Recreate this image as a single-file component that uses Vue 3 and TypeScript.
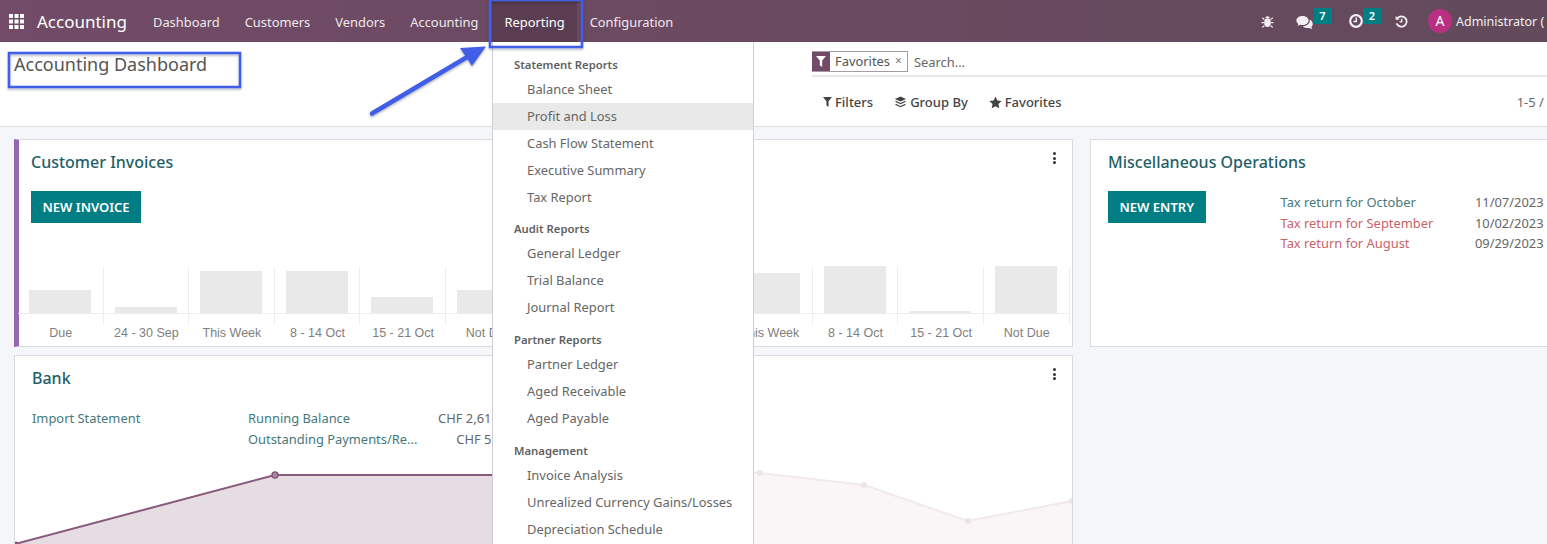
<script setup lang="ts">
type Bar = { label: string; top: number }
type MenuGroup = { title: string; items: string[] }

const navItems = ['Dashboard', 'Customers', 'Vendors', 'Accounting', 'Reporting', 'Configuration']

// top = how far the bar rises above the baseline
const invoiceBars: Bar[] = [
  { label: 'Due', top: 23 },
  { label: '24 - 30 Sep', top: 6 },
  { label: 'This Week', top: 42 },
  { label: '8 - 14 Oct', top: 42 },
  { label: '15 - 21 Oct', top: 16 },
  { label: 'Not Due', top: 23 },
]
// first two columns sit behind the open menu
const billBars: Bar[] = [
  { label: '', top: 30 },
  { label: '', top: 20 },
  { label: 'This Week', top: 40 },
  { label: '8 - 14 Oct', top: 47 },
  { label: '15 - 21 Oct', top: 2 },
  { label: 'Not Due', top: 47 },
]

const taxReturns = [
  { name: 'Tax return for October', date: '11/07/2023', late: false },
  { name: 'Tax return for September', date: '10/02/2023', late: true },
  { name: 'Tax return for August', date: '09/29/2023', late: true },
]

const menuGroups: MenuGroup[] = [
  {
    title: 'Statement Reports',
    items: ['Balance Sheet', 'Profit and Loss', 'Cash Flow Statement', 'Executive Summary', 'Tax Report'],
  },
  { title: 'Audit Reports', items: ['General Ledger', 'Trial Balance', 'Journal Report'] },
  { title: 'Partner Reports', items: ['Partner Ledger', 'Aged Receivable', 'Aged Payable'] },
  {
    title: 'Management',
    items: ['Invoice Analysis', 'Unrealized Currency Gains/Losses', 'Depreciation Schedule'],
  },
]
</script>

<template>
  <div class="screen">
    <header class="navbar">
      <svg class="apps" width="15" height="15" viewBox="0 0 15 15" fill="#fff">
        <rect x="0" y="0" width="4" height="4" /><rect x="5.5" y="0" width="4" height="4" /><rect x="11" y="0" width="4" height="4" />
        <rect x="0" y="5.5" width="4" height="4" /><rect x="5.5" y="5.5" width="4" height="4" /><rect x="11" y="5.5" width="4" height="4" />
        <rect x="0" y="11" width="4" height="4" /><rect x="5.5" y="11" width="4" height="4" /><rect x="11" y="11" width="4" height="4" />
      </svg>
      <span class="brand">Accounting</span>
      <nav class="nav">
        <a v-for="item in navItems" :key="item" class="nav__item" :class="{ 'nav__item--open': item === 'Reporting' }">{{ item }}</a>
      </nav>
      <div class="systray">
        <svg class="tray-bug" width="13" height="13" viewBox="0 0 14 14" fill="#f3eef2">
          <ellipse cx="7" cy="8.3" rx="3.6" ry="4.7" />
          <path d="M4.3 3.2a2.8 2.4 0 0 1 5.4 0z" />
          <path d="M3.6 5 1.4 3M3.3 8.3H.6M3.6 11.4 1.4 13.4M10.4 5l2.2-2M10.7 8.3h2.7M10.4 11.4l2.2 2" stroke="#f3eef2" stroke-width="1.3" fill="none" />
        </svg>
        <span class="tray-item tray-item--chat">
          <svg width="18" height="15" viewBox="0 0 18 15">
            <path d="M6.5 1C3 1 .4 3 .4 5.5c0 1.4.8 2.6 2 3.4L1.5 11l2.8-1.2c.7.2 1.4.3 2.2.3 3.4 0 6.1-2 6.1-4.6S9.900 1 6.500 1z" fill="#f3eef2" />
            <path d="M13.700 4.500c.1.3.1.7.1 1 0 3.200-3.100 5.600-7 5.800 1 1.100 2.800 1.800 4.700 1.800.6 0 1.200-.1 1.800-.2l3 1.300-1-2.300c1-.8 1.500-1.800 1.500-2.900 0-1.900-1.200-3.500-3.100-4.500z" fill="#f3eef2" />
          </svg>
          <span class="badge">7</span>
        </span>
        <span class="tray-item tray-item--clock">
          <svg width="14" height="14" viewBox="0 0 14 14" fill="none" stroke="#f3eef2">
            <circle cx="7" cy="7" r="5.800" stroke-width="2.200" />
            <path d="M7.300 3.600v3.900H4.400" stroke-width="1.500" />
          </svg>
          <span class="badge">2</span>
        </span>
        <svg class="tray-history" width="13" height="13" viewBox="0 0 14 14" fill="none" stroke="#f3eef2">
          <path d="M2.600 3.400A5.600 5.600 0 1 1 1.700 9" stroke-width="1.900" />
          <path d="M.7 1v4.200h4.200z" fill="#f3eef2" stroke="none" />
          <path d="M7.200 4v3.400H5" stroke-width="1.500" />
        </svg>
        <span class="avatar">A</span>
        <span class="user">Administrator (</span>
      </div>
    </header>

    <section class="panel">
      <h1 class="panel__title">Accounting Dashboard</h1>
      <div class="panel__tools">
        <div class="search">
          <span class="facet">
            <span class="facet__icon">
              <svg width="10" height="11" viewBox="0 0 10 11" fill="#fff"><path d="M0 0h10L6.200 4.600V11L3.800 9.200V4.600z" /></svg>
            </span>
            <span class="facet__label">Favorites</span>
            <span class="facet__close">×</span>
          </span>
          <span class="search__hint">Search...</span>
        </div>
        <div class="filters">
          <span class="filter filter--filters">
            <svg width="9" height="10" viewBox="0 0 10 11" fill="#444"><path d="M0 0h10L6.200 4.600V11L3.800 9.200V4.600z" /></svg>
            Filters
          </span>
          <span class="filter filter--group">
            <svg width="13" height="13" viewBox="0 0 14 14" fill="#444">
              <path d="M7 .5 13 3.200 7 6 1 3.200z" />
              <path d="M2.500 5.500 1 6.300 7 9l6-2.700-1.500-.8L7 7.500z" />
              <path d="M2.500 8.600 1 9.400l6 2.800 6-2.800-1.500-.8L7 10.700z" />
            </svg>
            Group By
          </span>
          <span class="filter">
            <svg width="13" height="13" viewBox="0 0 14 14" fill="#444"><path d="m7 .6 2 4.200 4.600.6-3.400 3.200.9 4.600L7 11l-4.100 2.200.9-4.600L.4 5.400 5 4.800z" /></svg>
            Favorites
          </span>
          <span class="pager">1-5 /</span>
        </div>
      </div>
    </section>

    <main class="kanban">
      <article class="card card--accent">
        <h2 class="card__title">Customer Invoices</h2>
        <button class="action">New Invoice</button>
        <div class="bars">
          <div v-for="bar in invoiceBars" :key="bar.label" class="bars__col">
            <div class="bars__plot"><span class="bars__bar" :style="{ height: bar.top + 'px' }"></span></div>
            <span class="bars__label">{{ bar.label }}</span>
          </div>
        </div>
      </article>

      <article class="card">
        <span class="kebab"><i></i><i></i><i></i></span>
        <div class="bars">
          <div v-for="(bar, i) in billBars" :key="i" class="bars__col">
            <div class="bars__plot"><span class="bars__bar" :style="{ height: bar.top + 'px' }"></span></div>
            <span class="bars__label">{{ bar.label }}</span>
          </div>
        </div>
      </article>

      <article class="card">
        <h2 class="card__title">Miscellaneous Operations</h2>
        <div class="misc">
          <button class="action action--flush">New Entry</button>
          <ul class="returns">
            <li v-for="item in taxReturns" :key="item.name" class="returns__row">
              <span :class="item.late ? 'returns__late' : 'returns__name'">{{ item.name }}</span>
              <span class="returns__date">{{ item.date }}</span>
            </li>
          </ul>
        </div>
      </article>

      <article class="card card--bank">
        <h2 class="card__title">Bank</h2>
        <div class="bank">
          <a class="bank__link">Import Statement</a>
          <div class="bank__stats">
            <div class="bank__row"><span>Running Balance</span><span class="bank__amount">CHF 2,610.00</span></div>
            <div class="bank__row"><span>Outstanding Payments/Re...</span><span class="bank__amount">CHF 51.00</span></div>
          </div>
        </div>
        <svg class="graph" width="521" height="100" viewBox="0 0 521 100">
          <path d="M0 84 260 15H520V100H0z" fill="#e6dde3" />
          <path d="M0 84 260 15H520" fill="none" stroke="#875a7b" stroke-width="2" />
          <circle cx="1" cy="84" r="2.500" fill="#875a7b" />
          <circle cx="260" cy="15" r="3" fill="#a98ba0" stroke="#875a7b" stroke-width="1.500" />
        </svg>
      </article>

      <article class="card card--bank">
        <span class="kebab"><i></i><i></i><i></i></span>
        <svg class="graph graph--faint" width="521" height="100" viewBox="0 0 521 100">
          <path d="M0 0 207 13 311 25 415 61 519 41V100H0z" fill="#faf6f8" />
          <path d="M0 0 207 13 311 25 415 61 519 41" fill="none" stroke="#f0e9ed" stroke-width="2" />
          <circle cx="207" cy="13" r="3" fill="#ece4e9" />
          <circle cx="311" cy="25" r="3" fill="#ece4e9" />
          <circle cx="415" cy="61" r="3" fill="#ece4e9" />
          <circle cx="519" cy="41" r="3" fill="#ece4e9" />
        </svg>
      </article>
    </main>

    <div class="menu">
      <div v-for="group in menuGroups" :key="group.title" class="menu__group">
        <div class="menu__header">{{ group.title }}</div>
        <a v-for="item in group.items" :key="item" class="menu__item" :class="{ 'menu__item--hover': item === 'Profit and Loss' }">{{ item }}</a>
      </div>
    </div>

    <svg class="notes" width="1547" height="544" viewBox="0 0 1547 544">
      <defs>
        <filter id="soft" x="-10%" y="-10%" width="120%" height="130%">
          <feDropShadow dx="0" dy="1.500" stdDeviation="1.200" flood-color="#000" flood-opacity="0.3" />
        </filter>
      </defs>
      <g filter="url(#soft)" fill="none" stroke="#3f5fe6" stroke-width="2.500">
        <rect x="490" y="0" width="92" height="47" />
        <rect x="9" y="53" width="231" height="34" />
      </g>
      <g filter="url(#soft)">
        <path d="M372 113.500 468 56.500" stroke="#3f5fe6" stroke-width="4.500" stroke-linecap="round" />
        <path d="M486 46.500 472 66 460 48z" fill="#3f5fe6" />
      </g>
    </svg>
  </div>
</template>

<style>
html,
body {
  margin: 0;
  background: #fff;
}
</style>

<style scoped>
.screen {
  position: relative;
  width: 1547px;
  height: 544px;
  overflow: hidden;
  font-family: 'Noto Sans', 'Open Sans', sans-serif;
  font-size: 12.900px;
  color: #4c4c4c;
  background: #f5f6f9;
}

.navbar {
  display: flex;
  align-items: center;
  height: 42px;
  padding-left: 9px;
  background: linear-gradient(90deg, #714b67 0%, #6c4a62 40%, #624a5b 100%);
  color: #f3eef2;
  white-space: nowrap;
}
.apps {
  flex: none;
}
.brand {
  margin-left: 13px;
  font-size: 17px;
  color: #fff;
}
.nav {
  display: flex;
  margin-left: 13.500px;
  height: 100%;
}
.nav__item {
  display: flex;
  align-items: center;
  padding: 1px 12.500px 0;
  color: #efe8ed;
}
.nav__item--open {
  margin-left: 1px;
  background: #5b3d52;
  color: #fff;
}
.systray {
  display: flex;
  align-items: center;
  margin-left: auto;
  flex: none;
  width: 287px;
  height: 100%;
  padding-left: 1px;
  box-sizing: border-box;
}
.tray-bug {
  flex: none;
}
.tray-item {
  display: flex;
  align-items: flex-start;
  height: 18px;
}
.tray-item--chat svg {
  margin-top: 3px;
}
.tray-item--clock svg {
  margin-top: 2px;
}
.tray-item--chat {
  margin-left: 22px;
}
.tray-item--clock {
  margin-left: 17px;
}
.badge {
  margin-top: -4px;
  width: 18px;
  height: 16px;
  background: #017e84;
  color: #fff;
  font-size: 11px;
  font-weight: 600;
  line-height: 15px;
  text-align: center;
}
.tray-item--chat .badge {
  margin-left: -1px;
  width: 19px;
}
.tray-history {
  flex: none;
  margin-left: 14px;
}
.avatar {
  flex: none;
  width: 24px;
  height: 24px;
  margin-left: 20px;
  border-radius: 50%;
  background: #b92f82;
  color: #fff;
  text-align: center;
  line-height: 24px;
  font-size: 14px;
}
.user {
  margin-left: 4px;
  padding-top: 1px;
  font-size: 12.500px;
}

.panel {
  display: flex;
  height: 84px;
  border-bottom: 1px solid #dcdee1;
  background: #fff;
  box-sizing: content-box;
}
.panel__title {
  width: 812px;
  flex: none;
  margin: 0;
  padding: 9px 0 0 14px;
  box-sizing: border-box;
  font-size: 18px;
  font-weight: 400;
  line-height: 26px;
  color: #555;
}
.panel__tools {
  flex: 1;
}
.search {
  display: flex;
  align-items: center;
  height: 27px;
  padding-top: 6px;
  border-bottom: 2px solid #e9e9ea;
}
.facet {
  display: flex;
  align-items: stretch;
  height: 21px;
  border: 1px solid #a69aa3;
  border-left: 0;
  box-sizing: border-box;
}
.facet__icon {
  display: flex;
  align-items: center;
  justify-content: center;
  width: 18px;
  background: #714b67;
}
.facet__label {
  margin-left: 5px;
  line-height: 19px;
  color: #555;
}
.facet__close {
  margin: 0 5px 0 5px;
  line-height: 18px;
  font-size: 12px;
  color: #777;
}
.search__hint {
  margin-left: 6px;
  color: #666;
}
.filters {
  display: flex;
  align-items: center;
  gap: 21px;
  height: 50px;
  padding-left: 11px;
  font-size: 13px;
  font-weight: 500;
  color: #444;
}
.filter {
  display: flex;
  align-items: center;
  gap: 3px;
  white-space: nowrap;
}
.pager {
  margin-left: 434px;
  font-weight: 400;
  color: #666;
  white-space: nowrap;
}

.kanban {
  display: grid;
  grid-template-columns: repeat(3, 521px);
  grid-template-rows: 208px 208px;
  column-gap: 17px;
  row-gap: 8px;
  padding: 12px 0 0 14px;
  width: 1700px;
}
.card {
  position: relative;
  box-sizing: border-box;
  padding: 11px 16px 0 17px;
  background: #fff;
  border: 1px solid #d9dbe0;
}
.card--accent {
  border-left: 5px solid #9467b5;
  padding-left: 12px;
}
.card--bank {
  overflow: hidden;
}
.card__title {
  margin: 0;
  font-size: 16px;
  font-weight: 500;
  line-height: 22px;
  color: #1f6068;
  white-space: nowrap;
}
.kebab {
  position: absolute;
  top: 12px;
  right: 16px;
  display: flex;
  flex-direction: column;
  gap: 1.500px;
}
.kebab i {
  display: block;
  width: 3px;
  height: 3px;
  border-radius: 50%;
  background: #333;
}
.action {
  display: block;
  margin-top: 18px;
  height: 32px;
  padding: 0 11.500px;
  border: 0;
  background: #017e84;
  color: #fff;
  font-family: inherit;
  font-size: 13px;
  font-weight: 600;
  text-transform: uppercase;
  white-space: nowrap;
}
.action--flush {
  margin-top: 0;
  flex: none;
}
.bars {
  position: absolute;
  left: 0;
  right: 2.500px;
  bottom: 0;
  display: flex;
  justify-content: flex-end;
}
.bars__col {
  position: relative;
  width: 85.600px;
  flex: none;
  height: 80px;
}
.bars__col::after {
  content: '';
  position: absolute;
  right: 0;
  top: 1px;
  height: 57px;
  width: 1px;
  background: #eeeeee;
}
.bars__plot {
  display: flex;
  align-items: flex-end;
  justify-content: center;
  height: 47px;
  padding-right: 1.500px;
  border-bottom: 1px solid #ededed;
}
.bars__bar {
  display: block;
  width: 62px;
  background: #e9e9e9;
}
.bars__label {
  display: block;
  margin-top: 11px;
  text-align: center;
  font-family: 'Liberation Sans', Arial, sans-serif;
  font-size: 12.500px;
  line-height: 16px;
  color: #808080;
  white-space: nowrap;
}

.misc {
  display: flex;
  margin-top: 18px;
}
.returns {
  flex: 1;
  margin: 1px 0 0 75px;
  padding: 0;
  list-style: none;
}
.returns__row {
  display: flex;
  justify-content: space-between;
  width: 263px;
  line-height: 20.500px;
}
.returns__name {
  color: #45797b;
}
.returns__late {
  color: #c8626a;
}
.returns__date {
  color: #666;
}

.bank {
  display: flex;
  margin-top: 19px;
  color: #45797b;
  line-height: 21px;
}
.bank__link {
  width: 216px;
  flex: none;
}
.bank__stats {
  width: 269px;
}
.bank__row {
  display: flex;
  justify-content: space-between;
  white-space: nowrap;
}
.bank__amount {
  color: #666;
}
.graph {
  position: absolute;
  left: 0;
  top: 104px;
  display: block;
}

.menu {
  position: absolute;
  left: 492px;
  top: 42px;
  width: 262px;
  height: 520px;
  box-sizing: border-box;
  padding-top: 11.500px;
  background: #fff;
  border: 1px solid #cfcfd4;
  border-top: 0;
}
.menu__group {
  margin-bottom: 7.700px;
}
.menu__header {
  height: 22px;
  padding-left: 21px;
  font-size: 11.300px;
  font-weight: 600;
  line-height: 22px;
  color: #5f5f5f;
}
.menu__item {
  display: block;
  height: 27px;
  padding-left: 34px;
  line-height: 27px;
  color: #666;
  white-space: nowrap;
}
.menu__item--hover {
  background: #e9e9e9;
}

.notes {
  position: absolute;
  left: 0;
  top: 0;
  pointer-events: none;
}
</style>
